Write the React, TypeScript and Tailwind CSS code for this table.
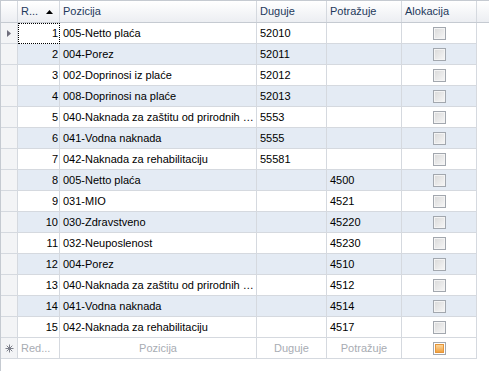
import React from 'react';

interface Row {
  id: number;
  pozicija: string;
  duguje: string;
  potrazuje: string;
}

// Pozicija column is narrow, long names are shown cut like in the grid
const rows: Row[] = [
  { id: 1, pozicija: '005-Netto plaća', duguje: '52010', potrazuje: '' },
  { id: 2, pozicija: '004-Porez', duguje: '52011', potrazuje: '' },
  { id: 3, pozicija: '002-Doprinosi iz plaće', duguje: '52012', potrazuje: '' },
  { id: 4, pozicija: '008-Doprinosi na plaće', duguje: '52013', potrazuje: '' },
  { id: 5, pozicija: '040-Naknada za zaštitu od prirodnih …', duguje: '5553', potrazuje: '' },
  { id: 6, pozicija: '041-Vodna naknada', duguje: '5555', potrazuje: '' },
  { id: 7, pozicija: '042-Naknada za rehabilitaciju', duguje: '55581', potrazuje: '' },
  { id: 8, pozicija: '005-Netto plaća', duguje: '', potrazuje: '4500' },
  { id: 9, pozicija: '031-MIO', duguje: '', potrazuje: '4521' },
  { id: 10, pozicija: '030-Zdravstveno', duguje: '', potrazuje: '45220' },
  { id: 11, pozicija: '032-Neuposlenost', duguje: '', potrazuje: '45230' },
  { id: 12, pozicija: '004-Porez', duguje: '', potrazuje: '4510' },
  { id: 13, pozicija: '040-Naknada za zaštitu od prirodnih …', duguje: '', potrazuje: '4512' },
  { id: 14, pozicija: '041-Vodna naknada', duguje: '', potrazuje: '4514' },
  { id: 15, pozicija: '042-Naknada za rehabilitaciju', duguje: '', potrazuje: '4517' },
];

const cols = 'grid grid-cols-[17px_42px_197px_70px_75px_75px_1fr]';

function CheckBox({ active = false }: { active?: boolean }) {
  return (
    <div
      className={`w-[13px] h-[13px] border border-[#a2a7ae] p-px ${active ? 'bg-white' : 'bg-[#f4f4f4]'}`}
    >
      <div
        className={`w-full h-full ${
          active
            ? 'bg-gradient-to-b from-[#fbd59a] to-[#f0a23e] border border-[#e4953a]'
            : 'bg-gradient-to-br from-[#dcdcdc] to-[#f4f4f4]'
        }`}
      />
    </div>
  );
}

export default function App() {
  return (
    <div
      className="w-[489px] h-[371px] bg-white border-l border-t border-[#c5cad1] overflow-hidden text-[11px] text-black"
      style={{ fontFamily: '"Liberation Sans", Arial, sans-serif' }}
    >
      {/* Header */}
      <div className={`${cols} h-[22px] bg-gradient-to-b from-white to-[#eceef2] border-b border-[#c5cad1] text-[#1e395b]`}>
        <div className="border-r border-[#d5d9df]" />
        <div className="border-r border-[#d5d9df] flex items-center pl-[3px] pr-[4px] justify-between">
          <span>R...</span>
          <svg width="7" height="4" viewBox="0 0 7 4" className="mr-[2px]">
            <path d="M3.5 0 L7 4 L0 4 Z" fill="#000" />
          </svg>
        </div>
        <div className="border-r border-[#d5d9df] flex items-center pl-[3px]">Pozicija</div>
        <div className="border-r border-[#d5d9df] flex items-center pl-[3px]">Duguje</div>
        <div className="border-r border-[#d5d9df] flex items-center pl-[3px]">Potražuje</div>
        <div className="border-r border-[#d5d9df] flex items-center pl-[3px]">Alokacija</div>
        <div />
      </div>

      {/* Rows */}
      {rows.map((r, i) => (
        <div key={r.id} className={`${cols} h-[21px]`}>
          <div className="bg-[#f3f4f6] border-r border-b border-[#d5d9df] flex items-center pl-[6px]">
            {i === 0 && (
              <svg width="4" height="7" viewBox="0 0 4 7">
                <path d="M0 0 L4 3.5 L0 7 Z" fill="#6e6e7c" />
              </svg>
            )}
          </div>
          <div
            className={`border-b flex items-center justify-end pr-[1px] ${
              i % 2 === 1 ? 'bg-[#e4ebf4]' : 'bg-white'
            } ${
              i === 0
                ? 'border border-dotted border-black'
                : 'border-r border-[#d5d9df]'
            }`}
          >
            {r.id}
          </div>
          <div
            className={`border-r border-b border-[#d5d9df] flex items-center pl-[3px] min-w-0 whitespace-nowrap ${
              i % 2 === 1 ? 'bg-[#e4ebf4]' : 'bg-white'
            }`}
          >
            {r.pozicija}
          </div>
          <div
            className={`border-r border-b border-[#d5d9df] flex items-center pl-[3px] ${
              i % 2 === 1 ? 'bg-[#e4ebf4]' : 'bg-white'
            }`}
          >
            {r.duguje}
          </div>
          <div
            className={`border-r border-b border-[#d5d9df] flex items-center pl-[3px] ${
              i % 2 === 1 ? 'bg-[#e4ebf4]' : 'bg-white'
            }`}
          >
            {r.potrazuje}
          </div>
          <div
            className={`border-r border-b border-[#d5d9df] flex items-center justify-center ${
              i % 2 === 1 ? 'bg-[#e4ebf4]' : 'bg-white'
            }`}
          >
            <CheckBox />
          </div>
          <div />
        </div>
      ))}

      {/* New item row */}
      <div className={`${cols} h-[21px] text-[#a8acb3]`}>
        <div className="bg-[#f3f4f6] border-r border-b border-[#d5d9df] flex items-center pl-[4px]">
          <svg width="9" height="9" viewBox="0 0 9 9" stroke="#7c7f8a" strokeWidth="1">
            <path d="M4.5 0.5 V8.5 M0.5 4.5 H8.5 M1.7 1.7 L7.3 7.3 M7.3 1.7 L1.7 7.3" />
          </svg>
        </div>
        <div className="border-r border-b border-[#d5d9df] flex items-center pl-[3px]">Red...</div>
        <div className="border-r border-b border-[#d5d9df] flex items-center justify-center">Pozicija</div>
        <div className="border-r border-b border-[#d5d9df] flex items-center justify-center">Duguje</div>
        <div className="border-r border-b border-[#d5d9df] flex items-center justify-center">Potražuje</div>
        <div className="border-r border-b border-[#d5d9df] flex items-center justify-center">
          <CheckBox active />
        </div>
        <div />
      </div>
    </div>
  );
}
